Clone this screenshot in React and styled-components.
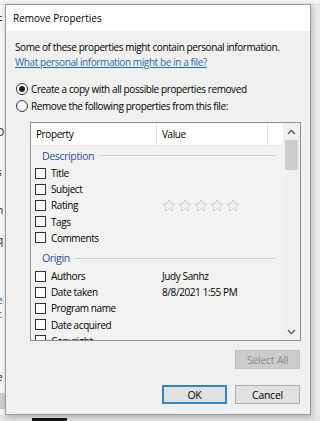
import React from "react";
import styled, { createGlobalStyle } from "styled-components";

const GlobalStyle = createGlobalStyle`
  html, body { margin: 0; padding: 0; }
  body {
    font-family: "Open Sans", "Noto Sans", "Liberation Sans", sans-serif;
    background: #e9e9e9;
  }
`;

const Desktop = styled.div`
  position: relative;
  width: 320px;
  height: 421px;
  overflow: hidden;
  background: #ebebeb;
`;

/* the explorer window peeking out behind the dialog */
const BackTop = styled.div`
  height: 4px;
  background: #f3f3f3;
  border-bottom: 1px solid #dcdcdc;
`;

const BackLeft = styled.div`
  position: absolute;
  left: 0;
  top: 5px;
  width: 5px;
  height: 412px;
  overflow: hidden;
  background: #f7f7f7;
`;

const BackGlyph = styled.span`
  position: absolute;
  left: -3px;
  font-size: 10px;
  line-height: 10px;
  color: ${(p) => p.color || "#222"};
`;

const BackBand = styled.div`
  position: absolute;
  left: 0;
  top: 393px;
  width: 5px;
  height: 16px;
  background: #cfcfcf;
`;

const BackBottom = styled.div`
  position: absolute;
  left: 0;
  bottom: 0;
  width: 320px;
  height: 6px;
  background: #e4e4e4;
`;

const BackTab = styled.div`
  position: absolute;
  left: 32px;
  bottom: 0;
  width: 35px;
  height: 3px;
  background: #1a1a1a;
`;

const Dialog = styled.div`
  position: absolute;
  left: 5px;
  top: 4px;
  width: 306px;
  height: 411px;
  box-sizing: border-box;
  border: 1px solid #9a9a9a;
  box-shadow: 1px 2px 6px rgba(0, 0, 0, 0.25);
  display: flex;
  flex-direction: column;
  background: #f0f0f0;
`;

const TitleBar = styled.div`
  height: 26px;
  flex: none;
  background: #ffffff;
  display: flex;
  align-items: center;
  padding-left: 7px;
  font-size: 10px;
  color: #000;
`;

const Body = styled.div`
  flex: 1;
  display: flex;
  flex-direction: column;
  padding: 9px 9px 10px 9px;
  font-size: 10px;
  letter-spacing: -0.4px;
  color: #000;
`;

const Line = styled.div`
  line-height: 15px;
  white-space: nowrap;
`;

const Link = styled.a`
  line-height: 15px;
  color: #1d6bb0;
  text-decoration: underline;
  white-space: nowrap;
  align-self: flex-start;
`;

const RadioRow = styled.label`
  display: flex;
  align-items: center;
  gap: 3px;
  height: 17px;
  margin-top: ${(p) => p.$top || 0}px;
  margin-left: 1px;
  white-space: nowrap;
`;

const RadioDot = styled.span`
  width: 12px;
  height: 12px;
  box-sizing: border-box;
  border-radius: 50%;
  border: 1px solid #333;
  background: #fff;
  display: flex;
  align-items: center;
  justify-content: center;

  &::after {
    content: "";
    width: 6px;
    height: 6px;
    border-radius: 50%;
    background: ${(p) => (p.$on ? "#222" : "transparent")};
  }
`;

const ListBox = styled.div`
  margin: 8px 0 0 15px;
  width: 271px;
  height: 219px;
  box-sizing: border-box;
  border: 1px solid #8f8f8f;
  display: flex;
  background: #f2f2f2;
`;

const ListMain = styled.div`
  flex: 1;
  display: flex;
  flex-direction: column;
  overflow: hidden;
`;

const Header = styled.div`
  height: 22px;
  flex: none;
  display: grid;
  grid-template-columns: 126px 111px 1fr;
  background: #fff;
  border-bottom: 1px solid #e5e5e5;
`;

const HeaderCell = styled.div`
  display: flex;
  align-items: center;
  padding-left: 5px;
  border-right: ${(p) => (p.$last ? "none" : "1px solid #e5e5e5")};
`;

const Rows = styled.div`
  flex: 1;
  overflow: hidden;
`;

const Group = styled.div`
  height: 19px;
  margin-top: ${(p) => p.$top || 0}px;
  display: flex;
  align-items: center;
  padding-left: 11px;
  padding-right: 8px;
  gap: 5px;
  color: #2c4f96;
  font-size: 10.6px;

  &::after {
    content: "";
    flex: 1;
    height: 1px;
    background: #c3cfe3;
  }
`;

const Row = styled.div`
  height: 16.2px;
  display: grid;
  grid-template-columns: 126px 1fr;
  align-items: center;
  white-space: nowrap;
`;

const NameCell = styled.div`
  display: flex;
  align-items: center;
  gap: 5px;
  padding-left: 4px;
`;

const Check = styled.span`
  width: 11px;
  height: 11px;
  box-sizing: border-box;
  border: 1px solid #333;
  background: #fff;
  flex: none;
`;

const ValueCell = styled.div`
  padding-left: 5px;
  display: flex;
  align-items: center;
  gap: 2px;
`;

const ScrollBar = styled.div`
  width: 17px;
  flex: none;
  display: flex;
  flex-direction: column;
  background: #f0f0f0;
`;

const ScrollArrow = styled.div`
  height: 17px;
  display: flex;
  align-items: center;
  justify-content: center;
`;

const Thumb = styled.div`
  height: 30px;
  margin: 0 2px;
  background: #cdcdcd;
`;

const ScrollTrack = styled.div`
  flex: 1;
`;

const ButtonRow = styled.div`
  display: flex;
  justify-content: flex-end;
  gap: 8px;
  margin-top: ${(p) => p.$top}px;
  padding-right: 1px;
`;

const Button = styled.div`
  width: 65px;
  height: 19px;
  box-sizing: border-box;
  display: flex;
  align-items: center;
  justify-content: center;
  font-size: 10.4px;
  letter-spacing: -0.2px;
  background: ${(p) => (p.$disabled ? "#cccccc" : "#e1e1e1")};
  color: ${(p) => (p.$disabled ? "#8c8c8c" : "#000")};
  border: ${(p) =>
    p.$default ? "2px solid #2f86c8" : p.$disabled ? "1px solid #bfbfbf" : "1px solid #adadad"};
`;

const Star = () => (
  <svg width="14" height="13" viewBox="0 0 24 23">
    <path
      d="M12 1.5l3.1 6.6 7.1.8-5.3 4.9 1.5 7.1L12 17.3l-6.4 3.6 1.5-7.1L1.8 8.9l7.1-.8z"
      fill="none"
      stroke="#c4c4c4"
      strokeWidth="1.4"
      strokeLinejoin="round"
    />
  </svg>
);

const Chevron = ({ up }) => (
  <svg width="9" height="6" viewBox="0 0 9 6">
    <path
      d={up ? "M1 5l3.5-3.5L8 5" : "M1 1l3.5 3.5L8 1"}
      fill="none"
      stroke="#606060"
      strokeWidth="1.5"
    />
  </svg>
);

const backGlyphs = [
  { y: 10, ch: "F" },
  { y: 122, ch: "D" },
  { y: 162, ch: "s" },
  { y: 200, ch: "n" },
  { y: 230, ch: "q" },
  { y: 290, ch: "e", color: "#2a5db0" },
  { y: 304, ch: "c", color: "#2a5db0" },
  { y: 367, ch: "e" },
];

const description = [
  { name: "Title" },
  { name: "Subject" },
  { name: "Rating", stars: true },
  { name: "Tags" },
  { name: "Comments" },
];

const origin = [
  { name: "Authors", value: "Judy Sanhz" },
  { name: "Date taken", value: "8/8/2021 1:55 PM" },
  { name: "Program name" },
  { name: "Date acquired" },
  { name: "Copyright" },
];

const PropRow = ({ item }) => (
  <Row>
    <NameCell>
      <Check />
      {item.name}
    </NameCell>
    <ValueCell>
      {item.stars ? [0, 1, 2, 3, 4].map((i) => <Star key={i} />) : item.value}
    </ValueCell>
  </Row>
);

export default function App() {
  return (
    <Desktop>
      <GlobalStyle />
      <BackTop />
      <BackLeft>
        {backGlyphs.map((g) => (
          <BackGlyph key={g.y} style={{ top: g.y }} color={g.color}>
            {g.ch}
          </BackGlyph>
        ))}
      </BackLeft>
      <BackBand />
      <BackBottom>
        <BackTab />
      </BackBottom>

      <Dialog>
        <TitleBar>Remove Properties</TitleBar>
        <Body>
          <Line>Some of these properties might contain personal information.</Line>
          <Link>What personal information might be in a file?</Link>

          <RadioRow $top={10}>
            <RadioDot $on />
            Create a copy with all possible properties removed
          </RadioRow>
          <RadioRow>
            <RadioDot />
            Remove the following properties from this file:
          </RadioRow>

          <ListBox>
            <ListMain>
              <Header>
                <HeaderCell>Property</HeaderCell>
                <HeaderCell>Value</HeaderCell>
                <HeaderCell $last />
              </Header>
              <Rows>
                <Group>Description</Group>
                {description.map((item) => (
                  <PropRow key={item.name} item={item} />
                ))}
                <Group $top={3}>Origin</Group>
                {origin.map((item) => (
                  <PropRow key={item.name} item={item} />
                ))}
              </Rows>
            </ListMain>
            <ScrollBar>
              <ScrollArrow>
                <Chevron up />
              </ScrollArrow>
              <Thumb />
              <ScrollTrack />
              <ScrollArrow>
                <Chevron />
              </ScrollArrow>
            </ScrollBar>
          </ListBox>

          <ButtonRow $top={9}>
            <Button $disabled>Select All</Button>
          </ButtonRow>
          <ButtonRow $top={16}>
            <Button $default>OK</Button>
            <Button>Cancel</Button>
          </ButtonRow>
        </Body>
      </Dialog>
    </Desktop>
  );
}
